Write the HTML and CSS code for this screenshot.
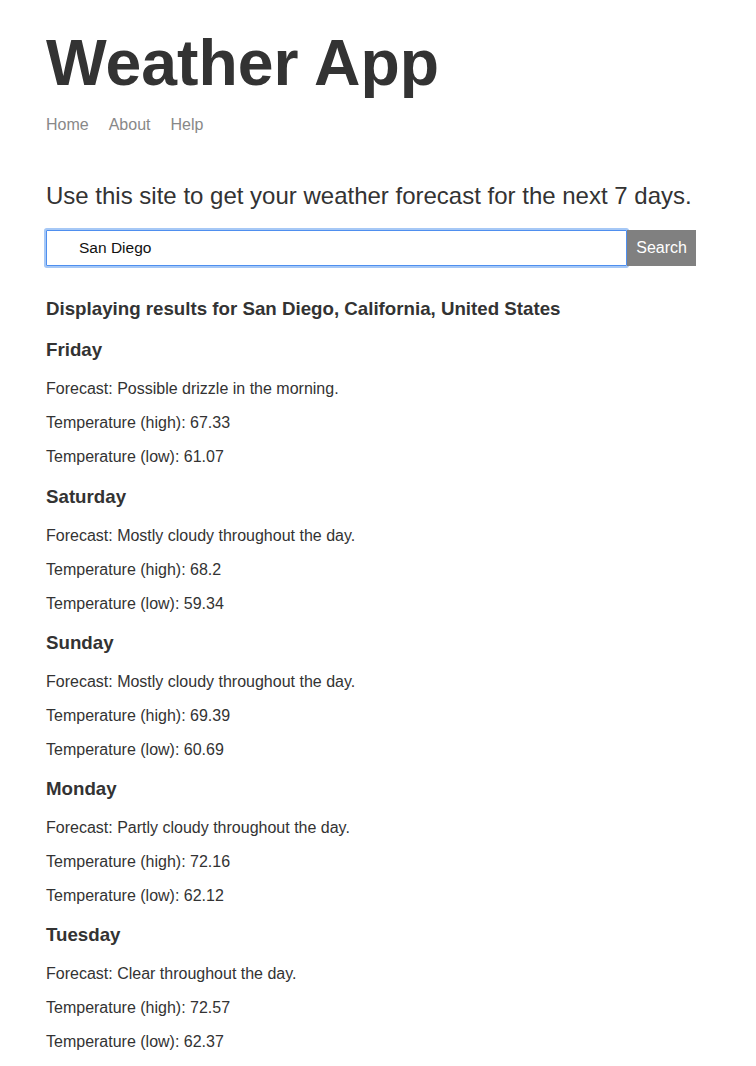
FILE: index.html
```html
<!DOCTYPE html>
<html lang="en">
<head>
<meta charset="utf-8">
<title>Weather App</title>
<link rel="stylesheet" href="styles.css">
</head>
<body>
<div class="page">
  <header class="header">
    <h1 class="title">Weather App</h1>
    <nav class="nav">
      <a class="nav-link" href="#">Home</a>
      <a class="nav-link" href="#">About</a>
      <a class="nav-link" href="#">Help</a>
    </nav>
  </header>
  <main class="main">
    <p class="intro">Use this site to get your weather forecast for the next 7 days.</p>
    <form class="search">
      <input class="search-input" type="text" value="San Diego">
      <button class="search-btn" type="button">Search</button>
    </form>
    <h2 class="results-title">Displaying results for San Diego, California, United States</h2>
    <section class="day">
      <h3 class="day-name">Friday</h3>
      <p class="line">Forecast: Possible drizzle in the morning.</p>
      <p class="line">Temperature (high): 67.33</p>
      <p class="line">Temperature (low): 61.07</p>
    </section>
    <section class="day">
      <h3 class="day-name">Saturday</h3>
      <p class="line">Forecast: Mostly cloudy throughout the day.</p>
      <p class="line">Temperature (high): 68.2</p>
      <p class="line">Temperature (low): 59.34</p>
    </section>
    <section class="day">
      <h3 class="day-name">Sunday</h3>
      <p class="line">Forecast: Mostly cloudy throughout the day.</p>
      <p class="line">Temperature (high): 69.39</p>
      <p class="line">Temperature (low): 60.69</p>
    </section>
    <section class="day">
      <h3 class="day-name">Monday</h3>
      <p class="line">Forecast: Partly cloudy throughout the day.</p>
      <p class="line">Temperature (high): 72.16</p>
      <p class="line">Temperature (low): 62.12</p>
    </section>
    <section class="day">
      <h3 class="day-name">Tuesday</h3>
      <p class="line">Forecast: Clear throughout the day.</p>
      <p class="line">Temperature (high): 72.57</p>
      <p class="line">Temperature (low): 62.37</p>
    </section>
  </main>
</div>
</body>
</html>
```

FILE: styles.css
```css
html, body {
  margin: 0;
  padding: 0;
  background: #ffffff;
}

body {
  font-family: "Liberation Sans", Arial, Helvetica, sans-serif;
  color: #333333;
}

.page {
  padding: 26px 46px 0 46px;
}

.title {
  margin: 0;
  font-size: 64.3px;
  line-height: 74px;
  font-weight: bold;
  color: #333333;
}

.nav {
  display: flex;
  gap: 20px;
  margin-top: 15px;
  font-size: 16px;
  line-height: 19px;
}

.nav-link {
  color: #888888;
  text-decoration: none;
}

.intro {
  margin: 48px 0 0 0;
  font-size: 24px;
  line-height: 28px;
  color: #333333;
}

.search {
  display: flex;
  width: 650px;
  height: 36px;
  margin: 20px 0 0 0;
}

.search-input {
  flex: 1;
  box-sizing: border-box;
  height: 36px;
  margin: 0;
  padding: 0 0 0 32px;
  border: 1px solid #4f8fef;
  border-radius: 1px;
  box-shadow: 0 0 0 2px #a6c8f6;
  outline: none;
  font-family: "Liberation Sans", Arial, Helvetica, sans-serif;
  font-size: 15.5px;
  color: #111111;
  background: #ffffff;
}

.search-btn {
  box-sizing: border-box;
  height: 36px;
  margin: 0;
  padding: 0 9px;
  border: none;
  background: #808080;
  color: #ffffff;
  font-family: "Liberation Sans", Arial, Helvetica, sans-serif;
  font-size: 16px;
}

.results-title {
  margin: 32px 0 19px 0;
  font-size: 18.72px;
  line-height: 22px;
  font-weight: bold;
}

.day-name {
  margin: 19.25px 0 19px 0;
  font-size: 18.72px;
  line-height: 22px;
  font-weight: bold;
}

.line {
  margin: 16px 0;
  font-size: 16px;
  line-height: 18px;
}
```
